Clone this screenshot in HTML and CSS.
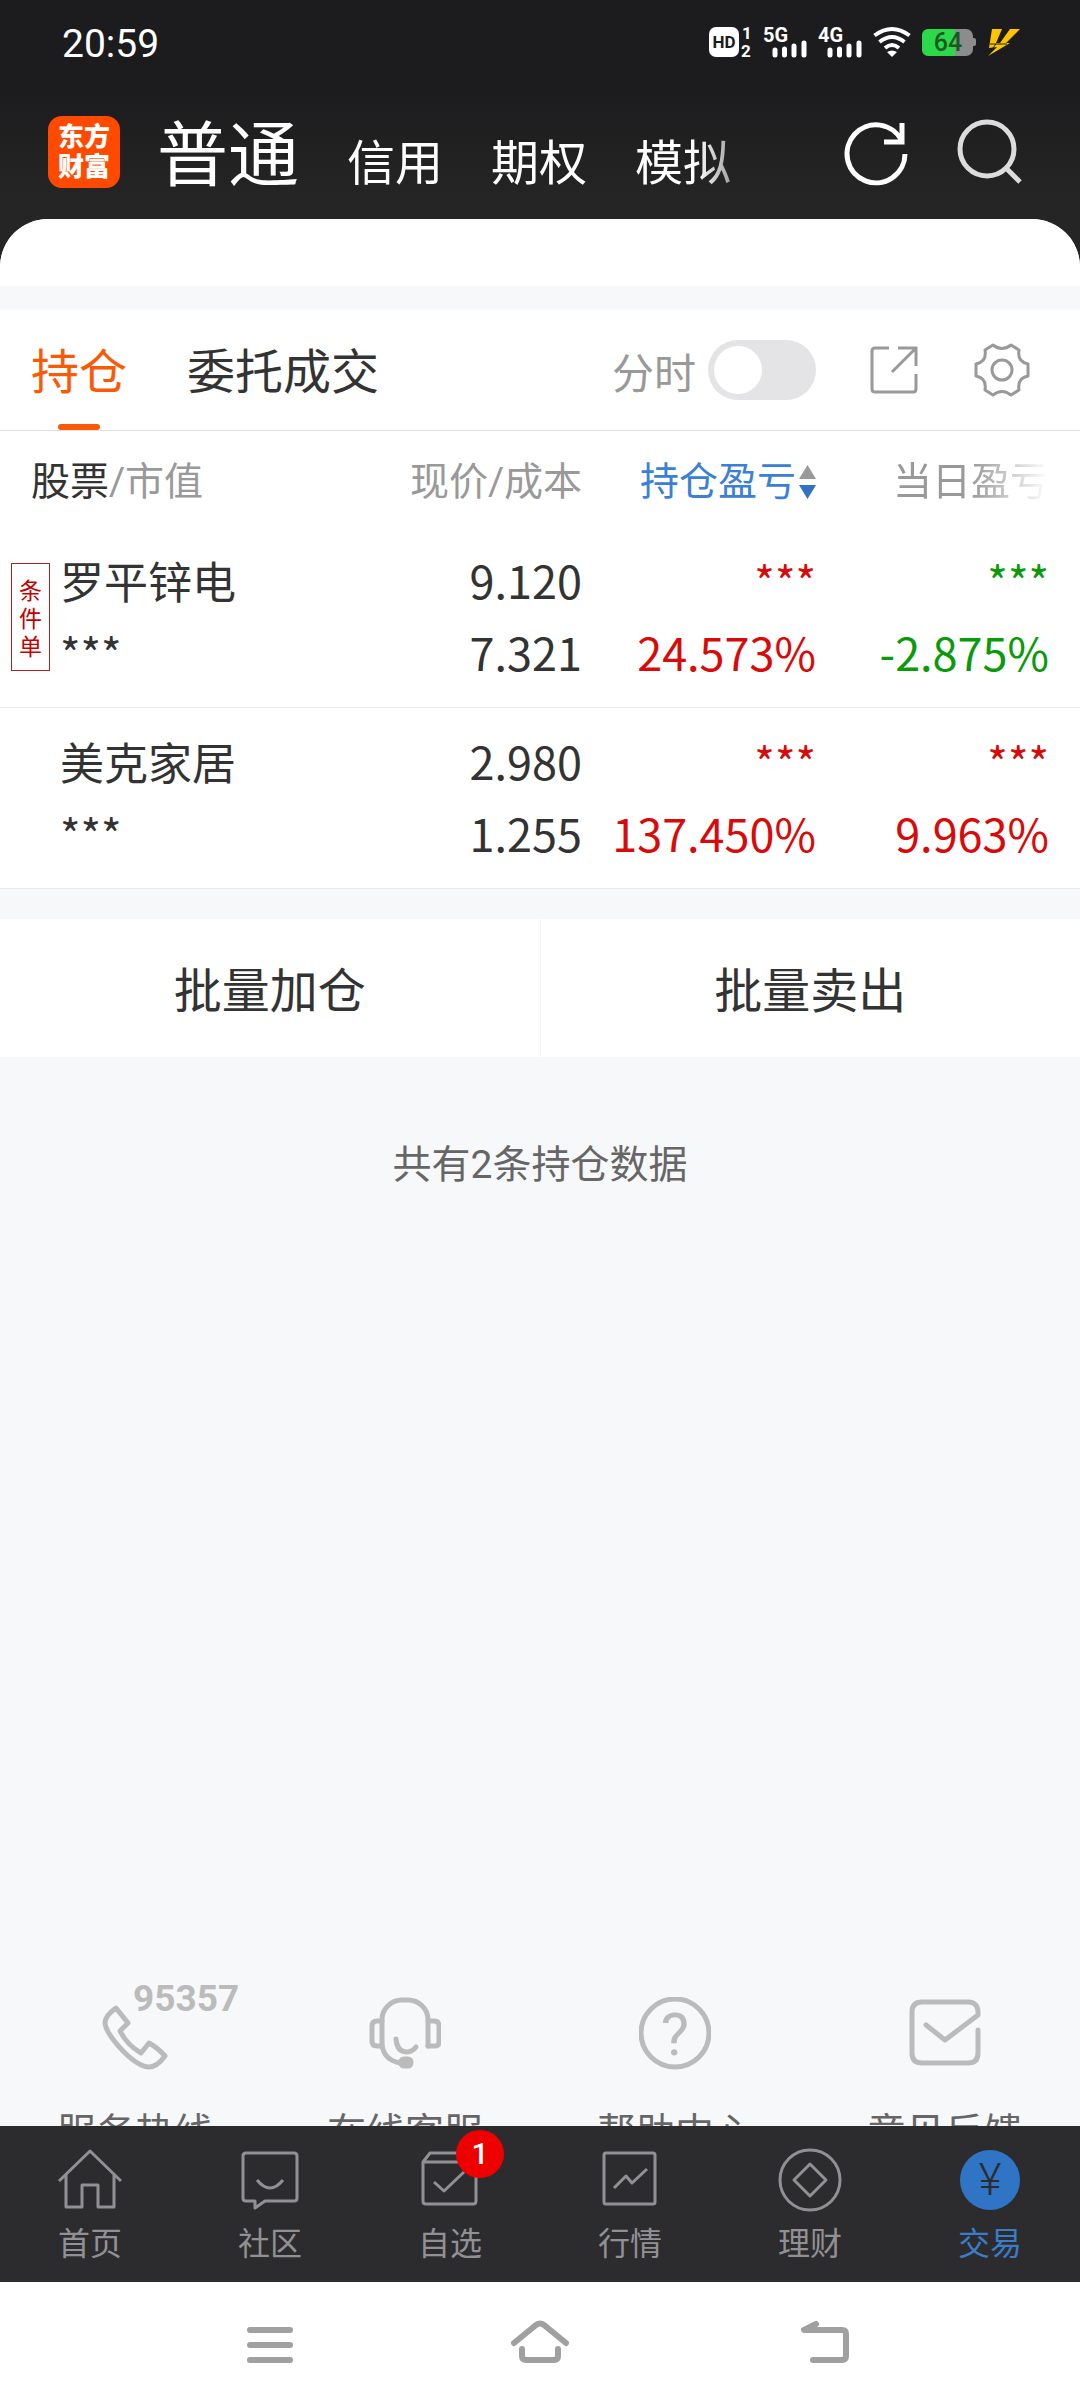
FILE: index.html
```html
<!DOCTYPE html>
<html lang="zh-CN">
<head>
    <meta charset="UTF-8">
    <meta name="viewport" content="width=device-width, initial-scale=1.0">
    <title>东方财富 - 交易</title>
    <link rel="stylesheet" href="styles.css">
</head>
<body>
    <div class="status-bar">
        <span class="time">20:59</span>
        <div class="status-icons">
            <svg width="43" height="32" viewBox="0 0 43 32">
                <rect x="0" y="1" width="30" height="30" rx="7" fill="#fff"/>
                <text x="15" y="22" class="hd">HD</text>
                <text x="33" y="13" class="sim">1</text>
                <text x="32" y="31" class="sim">2</text>
            </svg>
            <svg width="44" height="32" viewBox="0 0 44 32">
                <text x="0" y="16" class="net">5G</text>
                <path d="M12 24v5M21.500 23v6M31 20v9M41 17v12" class="bars"/>
            </svg>
            <svg width="44" height="32" viewBox="0 0 44 32">
                <text x="0" y="16" class="net">4G</text>
                <path d="M12 24v5M21.500 23v6M31 20v9M41 17v12" class="bars"/>
            </svg>
            <svg width="38" height="32" viewBox="0 0 38 32" fill="none" stroke="#fff" stroke-width="4">
                <path d="M1.500 9.500Q19-3.500 36.500 9.500M6.500 16Q19 6 31.500 16M12 22Q19 16 26 22"/>
                <path d="M14 26q5-3 10 0l-5 5z" fill="#fff" stroke="none"/>
            </svg>
            <svg width="54" height="32" viewBox="0 0 54 32">
                <path d="M50 12h2q2 0 2 2v4q0 2-2 2h-2z" fill="#8c8c8c"/>
                <rect x="0" y="3" width="51" height="27" rx="7" fill="#8c8c8c"/>
                <path d="M7 3h26v27H7q-7 0-7-7V10q0-7 7-7z" fill="#2bd94a"/>
                <text x="26" y="25" class="battery">64</text>
            </svg>
            <svg width="33" height="32" viewBox="0 0 33 32" fill="#ffc400">
                <path d="M5 3h10L9 17h4L23 3h10L19 17h4L1 30l9-9-8 1z"/>
                <path d="M3 18h17M2 27l7-9" stroke="#1c1c1e" stroke-width="1"/>
            </svg>
        </div>
    </div>

    <header class="app-bar">
        <a href="#" class="logo">东方<br>财富</a>
        <nav class="account-tabs">
            <a href="#" class="active">普通</a>
            <a href="#">信用</a>
            <a href="#">期权</a>
            <a href="#">模拟</a>
        </nav>
        <button class="icon-btn" aria-label="刷新">
            <svg width="68" height="68" viewBox="0 0 68 68" fill="none" stroke="#fff" stroke-width="5">
                <path d="M60 23A29 29 0 1 0 63 36"/>
                <path d="M60 5v19H42"/>
            </svg>
        </button>
        <button class="icon-btn" aria-label="搜索">
            <svg width="68" height="68" viewBox="0 0 68 68" fill="none" stroke="#dcdcdc" stroke-width="5">
                <circle cx="31" cy="31" r="27"/>
                <path d="M50 50l14 14"/>
            </svg>
        </button>
    </header>

    <main>
        <div class="summary"></div>

        <section class="holdings">
            <div class="toolbar">
                <nav class="view-tabs">
                    <a href="#" class="active">持仓</a>
                    <a href="#">委托成交</a>
                </nav>
                <label class="switch">分时<input type="checkbox"></label>
                <button class="icon-btn" aria-label="分享">
                    <svg width="56" height="56" viewBox="0 0 56 56" fill="none" stroke="#999" stroke-width="3">
                        <path d="M23 6H9Q6 6 6 9v38q0 3 3 3h38q3 0 3-3V32"/>
                        <path d="M32 6h18v18M50 6L26 30"/>
                    </svg>
                </button>
                <button class="icon-btn" aria-label="设置">
                    <svg width="56" height="56" viewBox="-28 -28 56 56" fill="none" stroke="#999" stroke-width="3" stroke-linejoin="round">
                        <path d="M-9-25Q0-18 9-25L17-20Q15-8 26-6V6Q15 8 17 20L9 25Q0 18-9 25L-17 20Q-15 8-26 6V-6Q-15-8-17-20Z"/>
                        <circle r="10"/>
                    </svg>
                </button>
            </div>

            <table>
                <colgroup>
                    <col>
                    <col class="col-price">
                    <col class="col-profit">
                    <col class="col-day">
                </colgroup>
                <thead>
                    <tr>
                        <th><b>股票</b>/市值</th>
                        <th>现价/成本</th>
                        <th>
                            <button class="sort">持仓盈亏<svg width="17" height="36" viewBox="0 0 17 36"><path d="M8.500 1L17 15H0z" fill="#999"/><path d="M8.500 35L17 21H0z" fill="#3073c4"/></svg></button>
                        </th>
                        <th><span class="fade">当日盈亏</span></th>
                    </tr>
                </thead>
                <tbody>
                    <tr>
                        <td><span class="tag">条件单</span><div class="name">罗平锌电</div><div class="hidden-value">***</div></td>
                        <td><div>9.120</div><div>7.321</div></td>
                        <td class="up"><div class="hidden-value">***</div><div>24.573%</div></td>
                        <td class="down"><div class="hidden-value">***</div><div>-2.875%</div></td>
                    </tr>
                    <tr>
                        <td><div class="name">美克家居</div><div class="hidden-value">***</div></td>
                        <td><div>2.980</div><div>1.255</div></td>
                        <td class="up"><div class="hidden-value">***</div><div>137.450%</div></td>
                        <td class="up"><div class="hidden-value">***</div><div>9.963%</div></td>
                    </tr>
                </tbody>
            </table>
        </section>

        <div class="batch">
            <button>批量加仓</button>
            <button>批量卖出</button>
        </div>

        <p class="count">共有2条持仓数据</p>

        <div class="services">
            <a href="#">
                <span class="hotline">95357</span>
                <svg width="72" height="74" viewBox="-4 -8 72 74">
                    <path d="M13 3L25 18L17 26Q24 40 38 48L46 38Q55 43 62 51Q54 62 46 62Q36 62 20 46Q2 27 2 17Q3 10 13 3Z"/>
                </svg>
                服务热线
            </a>
            <a href="#">
                <svg width="72" height="74" viewBox="0 0 72 74">
                    <path d="M13 48V22A20 20 0 0 1 33 3H39A20 20 0 0 1 59 22V49"/>
                    <path d="M13 24H8Q3 24 3 29V44Q3 49 8 49H13M59 24H65Q70 24 70 29V45Q70 49 66 49H59"/>
                    <path d="M13 48Q15 63 31 66M27 42Q28 55 38 55Q43 55 47 50"/>
                    <rect x="32" y="62" width="10" height="7" rx="3" fill="#bbb"/>
                </svg>
                在线客服
            </a>
            <a href="#">
                <svg width="72" height="74" viewBox="0 0 72 74">
                    <circle cx="36" cy="36" r="34"/>
                    <text x="36" y="58">?</text>
                </svg>
                帮助中心
            </a>
            <a href="#">
                <svg width="72" height="74" viewBox="0 0 72 74">
                    <path d="M17 28L36 43L69 18Q70 5 59 5H13Q3 5 3 15V56Q3 66 13 66H59Q69 66 69 56V33"/>
                </svg>
                意见反馈
            </a>
        </div>
    </main>

    <nav class="tab-bar">
        <a href="#">
            <svg width="64" height="64" viewBox="0 0 64 64"><path d="M1 33L32 3L63 33M8 27V59H24V37H40V59H56V27"/></svg>
            首页
        </a>
        <a href="#">
            <svg width="64" height="64" viewBox="0 0 64 64"><path d="M27 53H56Q59 53 59 50V8Q59 5 56 5H8Q5 5 5 8V50Q5 53 8 53H17V60ZM19 32Q32 48 45 32"/></svg>
            社区
        </a>
        <a href="#">
            <svg width="64" height="64" viewBox="0 0 64 64"><path d="M5 14L12 5H51L58 14V53Q58 56 55 56H8Q5 56 5 53ZM5 14H58M16 34L26 43L46 24"/></svg>
            <span class="badge">1</span>
            自选
        </a>
        <a href="#">
            <svg width="64" height="64" viewBox="0 0 64 64"><rect x="6" y="5" width="51" height="51" rx="2"/><path d="M16 40L28 28L34 35L49 21"/></svg>
            行情
        </a>
        <a href="#">
            <svg width="64" height="64" viewBox="0 0 64 64"><circle cx="32" cy="32" r="30"/><path d="M32 16L48 32L32 48L16 32Z"/></svg>
            理财
        </a>
        <a href="#" class="active">
            <svg width="64" height="64" viewBox="0 0 64 64"><circle cx="32" cy="32" r="30" fill="#3075c5" stroke="none"/><text x="32" y="47">¥</text></svg>
            交易
        </a>
    </nav>

    <div class="system-nav">
        <button aria-label="菜单">
            <svg width="80" height="56" viewBox="0 0 80 56"><path d="M20 13H60M20 28H60M20 43H60"/></svg>
        </button>
        <button aria-label="主页">
            <svg width="80" height="56" viewBox="0 0 80 56"><path d="M14 26L36 8Q40 5 44 8L66 26M22 32V39Q22 43 26 43H54Q58 43 58 39V32"/></svg>
        </button>
        <button aria-label="返回">
            <svg width="80" height="56" viewBox="0 0 80 56"><path d="M46 7L34 13H72Q76 13 76 17V39Q76 43 72 43H43"/></svg>
        </button>
    </div>
</body>
</html>
```

FILE: styles.css
```css
* {
    box-sizing: border-box;
}
body {
    margin: 0;
    height: 100vh;
    display: flex;
    flex-direction: column;
    background: linear-gradient(#1c1c1e 0, #1c1c1e 88px, #252525 200px);
    color: #333;
    font-family: Roboto, "Noto Sans CJK SC", sans-serif;
}
a {
    color: inherit;
    text-decoration: none;
}
button {
    padding: 0;
    border: none;
    background: none;
    color: inherit;
    font: inherit;
    cursor: pointer;
}
svg {
    display: block;
    flex: none;
}

/* status bar */
.status-bar {
    height: 88px;
    padding: 0 60px 0 62px;
    display: flex;
    justify-content: space-between;
    align-items: center;
    color: #fff;
}
.time {
    font-size: 39px;
}
.status-icons {
    display: flex;
    gap: 11px;
    margin-bottom: 4px;
}
.status-icons svg {
    overflow: visible;
}
.status-icons text {
    font-weight: bold;
    fill: #fff;
}
.status-icons .hd {
    font-size: 17px;
    fill: #1c1c1e;
    text-anchor: middle;
}
.status-icons .sim {
    font-size: 17px;
}
.status-icons .net {
    font-size: 20px;
}
.status-icons .battery {
    font-size: 25px;
    font-weight: 500;
    fill: #17591f;
    text-anchor: middle;
}
.bars {
    stroke: #fff;
    stroke-width: 5;
    stroke-linecap: round;
}

/* app bar */
.app-bar {
    height: 131px;
    padding: 0 56px 4px 48px;
    display: flex;
    align-items: center;
    color: #fff;
}
.logo {
    width: 72px;
    height: 72px;
    padding-top: 6px;
    border-radius: 14px;
    background: #ff4a00;
    font-size: 26px;
    font-weight: 900;
    line-height: 30px;
    text-align: center;
}
.account-tabs {
    flex: 1;
    margin-left: 37px;
    padding-top: 16px;
    display: flex;
    align-items: baseline;
    gap: 48px;
    font-size: 48px;
    line-height: 84px;
    white-space: nowrap;
    overflow: hidden;
    -webkit-mask-image: linear-gradient(90deg, #000 540px, transparent 620px);
    mask-image: linear-gradient(90deg, #000 540px, transparent 620px);
}
.account-tabs .active {
    font-size: 71px;
}
.app-bar .icon-btn + .icon-btn {
    margin-left: 46px;
}

main {
    flex: 1;
    min-height: 0;
    display: flex;
    flex-direction: column;
    overflow: hidden;
    border-radius: 48px 48px 0 0;
    background: #f7f8fa;
}
.summary {
    flex: none;
    height: 67px;
    margin-bottom: 24px;
    background: #fff;
}
.holdings {
    background: #fff;
}

/* toolbar */
.toolbar {
    height: 121px;
    padding: 0 50px 0 31px;
    display: flex;
    align-items: center;
    border-bottom: 1px solid #e0e0e0;
}
.view-tabs {
    flex: 1;
    align-self: stretch;
    display: flex;
    gap: 60px;
    font-size: 48px;
    line-height: 126px;
}
.view-tabs a {
    height: 120px;
}
.view-tabs .active {
    position: relative;
    color: #fa5a05;
}
.view-tabs .active::after {
    content: "";
    position: absolute;
    left: 50%;
    bottom: 0;
    width: 42px;
    height: 6px;
    margin-left: -21px;
    border-radius: 3px;
    background: #fa5a05;
}
.switch {
    display: flex;
    align-items: center;
    gap: 12px;
    margin-right: 50px;
    color: #999;
    font-size: 42px;
}
.switch input {
    appearance: none;
    width: 108px;
    height: 60px;
    margin: 0;
    padding: 6px;
    border-radius: 30px;
    background: #e4e4e6;
}
.switch input::before {
    content: "";
    display: block;
    width: 48px;
    height: 48px;
    border-radius: 50%;
    background: #fff;
}
.switch input:checked::before {
    margin-left: auto;
}
.toolbar .icon-btn + .icon-btn {
    margin-left: 52px;
}

/* holdings table */
table {
    width: 100%;
    table-layout: fixed;
    border-collapse: collapse;
    text-align: right;
}
.col-price {
    width: 232px;
}
.col-profit {
    width: 234px;
}
.col-day {
    width: 264px;
}
th {
    height: 96px;
    padding: 6px 0 0;
    color: #999;
    font-size: 39px;
    font-weight: normal;
    line-height: 56px;
    white-space: nowrap;
}
th b {
    color: #333;
    font-weight: normal;
}
th:first-child {
    padding-left: 31px;
    text-align: left;
}
th:last-child,
td:last-child {
    padding-right: 31px;
}
.sort {
    display: inline-flex;
    align-items: center;
    gap: 3px;
    color: #3a80d8;
}
.fade {
    -webkit-mask-image: linear-gradient(90deg, #000 50%, transparent);
    mask-image: linear-gradient(90deg, #000 50%, transparent);
}
td {
    position: relative;
    padding: 17px 0 19px;
    border-bottom: 1px solid #ebebeb;
    font-family: "Noto Sans CJK SC", sans-serif;
    font-size: 45px;
    line-height: 72px;
}
td:first-child {
    padding-left: 60px;
    text-align: left;
}
.name,
.hidden-value {
    font-size: 44px;
}
.up {
    color: #d80a0a;
}
.down {
    color: #0a9a0a;
}
.tag {
    position: absolute;
    left: 11px;
    top: 36px;
    width: 39px;
    padding: 11px 7px;
    border: 1px solid #b02020;
    color: #c80000;
    font-size: 23px;
    line-height: 28px;
}

.batch {
    display: flex;
    margin-top: 30px;
    background: #fff;
}
.batch button {
    flex: 1;
    height: 138px;
    padding-bottom: 2px;
    font-size: 48px;
}
.batch button + button {
    border-left: 1px solid #f5f5f5;
}
.count {
    margin: 80px 0 0;
    color: #666;
    font-size: 39px;
    line-height: 56px;
    text-align: center;
}

/* service links, partly under the tab bar */
.services {
    display: flex;
    margin: auto 0 -35px;
}
.services a {
    position: relative;
    flex: 1;
    display: flex;
    flex-direction: column;
    align-items: center;
    gap: 34px;
    color: #666;
    font-size: 39px;
    line-height: 56px;
}
.services svg {
    fill: none;
    stroke: #bbb;
    stroke-width: 5;
    stroke-linecap: round;
    stroke-linejoin: round;
}
.services text {
    fill: #bbb;
    stroke: none;
    font-size: 60px;
    text-anchor: middle;
}
.hotline {
    position: absolute;
    left: 50%;
    top: -16px;
    margin-left: -2px;
    color: #bbb;
    font-size: 37px;
    font-weight: bold;
    line-height: 36px;
}

/* bottom bars */
.tab-bar {
    display: flex;
    height: 156px;
    padding-top: 22px;
    background: #2c2c2e;
    color: #919195;
}
.tab-bar a {
    position: relative;
    flex: 1;
    display: flex;
    flex-direction: column;
    align-items: center;
    gap: 12px;
    font-size: 32px;
    line-height: 40px;
}
.tab-bar svg {
    fill: none;
    stroke: #919195;
    stroke-width: 3;
    stroke-linejoin: round;
}
.tab-bar text {
    fill: #2c2c2e;
    stroke: none;
    font-size: 44px;
    font-weight: 300;
    text-anchor: middle;
}
.tab-bar .active {
    color: #3a7cc8;
}
.badge {
    position: absolute;
    top: -18px;
    left: 50%;
    width: 48px;
    height: 48px;
    margin-left: 6px;
    border-radius: 50%;
    background: #ee0000;
    color: #fff;
    font-size: 30px;
    font-weight: 500;
    line-height: 48px;
    text-align: center;
}
.system-nav {
    display: flex;
    height: 126px;
    padding: 0 135px;
    background: #fff;
}
.system-nav button {
    flex: 1;
    display: flex;
    justify-content: center;
    align-items: center;
}
.system-nav svg {
    fill: none;
    stroke: #a0a0a0;
    stroke-width: 6;
    stroke-linecap: round;
    stroke-linejoin: round;
}
```
